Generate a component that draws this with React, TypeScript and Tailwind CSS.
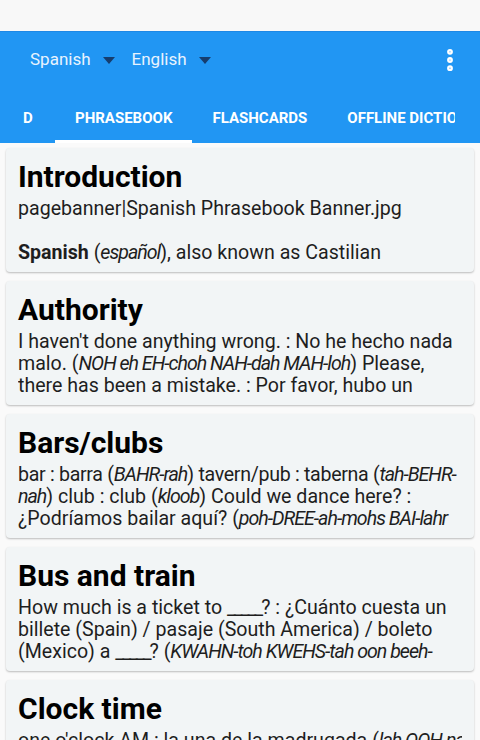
import { EllipsisVertical } from "lucide-react";

const tabs = ["D", "PHRASEBOOK", "FLASHCARDS", "OFFLINE DICTIONARY"];

function Card({ title, children }: { title: string; children: React.ReactNode }) {
  return (
    <div className="mx-[6px] rounded-[4px] bg-[#f2f5f6] px-3 pt-[11px] pb-2 shadow-[0_1px_2px_rgba(0,0,0,0.25)]">
      <h2 className="mb-[3px] text-[30px] font-bold leading-[36px] text-black">{title}</h2>
      <div className="h-[66px] overflow-hidden text-[19.6px] leading-[22px] whitespace-nowrap text-[#1e1e1e]">
        {children}
      </div>
    </div>
  );
}

// pronunciation in italics, a bit tighter like the device font
function Em({ children }: { children: React.ReactNode }) {
  return <i className="tracking-[-1px]">{children}</i>;
}

// blank to fill in
function Blank() {
  return <span className="tracking-[-2px]">_____</span>;
}

export default function App() {
  return (
    <div className="h-[740px] w-[480px] overflow-hidden bg-[#fafafa] font-['Roboto',sans-serif]">
      <div className="h-[31px] bg-[#f8f8f8]" />
      <div className="border-t border-[#1e88e5] bg-[#2196f3]">
        <div className="flex h-[56px] items-center pl-[30px] pr-[16px]">
          <div className="flex items-center gap-[12px] text-[17px] text-[#e8f3fe]">
            <span>Spanish</span>
            <span className="border-x-[6px] border-t-[7px] border-x-transparent border-t-[#163d6e]" />
          </div>
          <div className="ml-[17px] flex items-center gap-[12px] text-[17px] text-[#e8f3fe]">
            <span>English</span>
            <span className="border-x-[6px] border-t-[7px] border-x-transparent border-t-[#163d6e]" />
          </div>
          <EllipsisVertical className="ml-auto text-white" size={28} strokeWidth={3} />
        </div>
        <div className="flex h-[55px] w-[455px] overflow-hidden">
          {tabs.map((t, i) => (
            <div
              key={t}
              className={`flex shrink-0 items-center justify-center border-b-[3px] px-5 pt-2 text-[15px] font-bold whitespace-nowrap text-white ${
                i === 1 ? "border-white" : "border-transparent"
              } ${i === 0 ? "w-[55px] justify-start pl-[23px]" : ""}`}
            >
              {t}
            </div>
          ))}
        </div>
      </div>
      <div className="flex flex-col gap-[9px] pt-[5px]">
        <Card title="Introduction">
          <p>pagebanner|Spanish Phrasebook Banner.jpg</p>
          <p className="h-[22px]" />
          <p>
            <b>Spanish</b> (<Em>español</Em>), also known as Castilian
          </p>
        </Card>
        <Card title="Authority">
          <p>I haven't done anything wrong. : No he hecho nada</p>
          <p>
            malo. (<Em>NOH eh EH-choh NAH-dah MAH-loh</Em>) Please,
          </p>
          <p>there has been a mistake. : Por favor, hubo un</p>
          <p>error. (<Em>pohr fah-BOHR OO-boh oon eh-RROHR</Em>)</p>
        </Card>
        <Card title="Bars/clubs">
          <p className="tracking-[-0.3px]">
            bar : barra (<Em>BAHR-rah</Em>) tavern/pub : taberna (<Em>tah-BEHR-</Em>
          </p>
          <p>
            <Em>nah</Em>) club : club (<Em>kloob</Em>) Could we dance here? :
          </p>
          <p>
            ¿Podríamos bailar aquí? (<Em>poh-DREE-ah-mohs BAI-lahr</Em>
          </p>
          <p>
            <Em>ah-KEE</Em>)
          </p>
        </Card>
        <Card title="Bus and train">
          <p>
            How much is a ticket to <Blank />? : ¿Cuánto cuesta un
          </p>
          <p>billete (Spain) / pasaje (South America) / boleto</p>
          <p>
            (Mexico) a <Blank />? (<Em>KWAHN-toh KWEHS-tah oon beeh-</Em>
          </p>
          <p>
            <Em>YEH-teh</Em>)
          </p>
        </Card>
        <Card title="Clock time">
          <p>
            one o'clock AM : la una de la madrugada (<Em>lah OOH-nah</Em>
          </p>
          <p>
            <Em>deh lah mah-droo-GAH-dah</Em>)
          </p>
        </Card>
      </div>
    </div>
  );
}
